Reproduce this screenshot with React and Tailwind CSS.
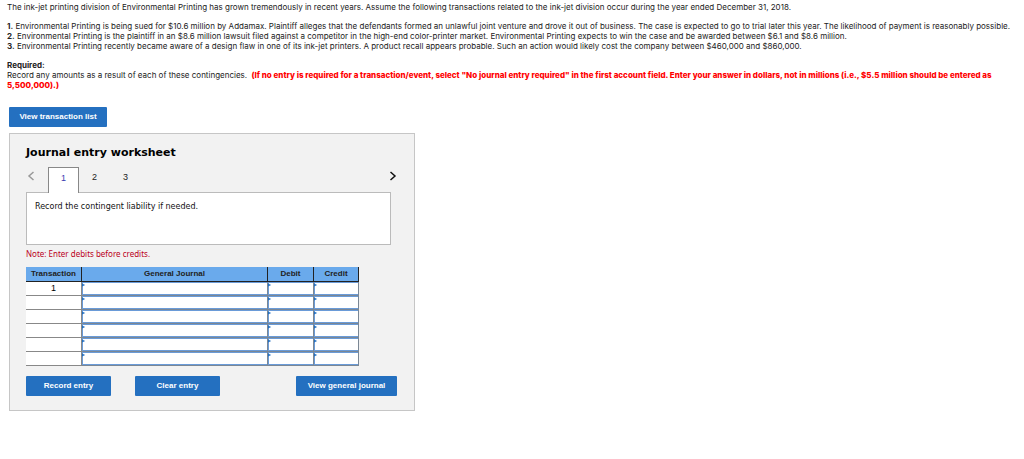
import { useState } from "react";

const contingencies = [
  "Environmental Printing is being sued for $10.6 million by Addamax. Plaintiff alleges that the defendants formed an unlawful joint venture and drove it out of business. The case is expected to go to trial later this year. The likelihood of payment is reasonably possible.",
  "Environmental Printing is the plaintiff in an $8.6 million lawsuit filed against a competitor in the high-end color-printer market. Environmental Printing expects to win the case and be awarded between $6.1 and $8.6 million.",
  "Environmental Printing recently became aware of a design flaw in one of its ink-jet printers. A product recall appears probable. Such an action would likely cost the company between $460,000 and $860,000.",
];

const tabs = [1, 2, 3];
const rows = [1, 2, 3, 4, 5, 6];
const fields = ["General Journal", "Debit", "Credit"];

function Problem() {
  return (
    <section className="font-['Inter',sans-serif] text-[8px] leading-[10px] text-[#222222]">
      <p>
        The ink-jet printing division of Environmental Printing has grown tremendously in recent
        years. Assume the following transactions related to the ink-jet division occur during the
        year ended December 31, 2018.
      </p>
      <div className="my-[9px]">
        {contingencies.map((text, i) => (
          <p key={i}>
            <b>{i + 1}.</b> {text}
          </p>
        ))}
      </div>
      <h2 className="font-bold">Required:</h2>
      <p>
        Record any amounts as a result of each of these contingencies.{" "}
        <b className="ml-0.5 font-extrabold text-[#ff0000]">
          (If no entry is required for a transaction/event, select "No journal entry required" in
          the first account field. Enter your answer in dollars, not in millions (i.e., $5.5
          million should be entered as 5,500,000).)
        </b>
      </p>
    </section>
  );
}

function Button({ className, children }) {
  return (
    <button
      type="button"
      className={`h-5 rounded-[1px] bg-[#2470c0] text-center text-[8px] font-bold text-white hover:bg-[#1c5da3] ${className}`}
    >
      {children}
    </button>
  );
}

function Chevron({ flip }) {
  return (
    <svg className="h-2.5 w-2" viewBox="0 0 8 10" fill="none" stroke="currentColor" strokeWidth="1.5">
      <path d={flip ? "M6.5 1 2 5l4.500 4" : "M1.500 1 6 5 1.500 9"} />
    </svg>
  );
}

function Tabs({ current, onChange }) {
  return (
    <nav className="flex h-[25px] items-stretch text-[9px]">
      <button
        type="button"
        aria-label="Previous"
        className="flex w-[22px] items-center pl-px pb-2 text-[#999999]"
        onClick={() => onChange(Math.max(1, current - 1))}
      >
        <Chevron flip />
      </button>
      {tabs.map((n) => (
        <button
          key={n}
          type="button"
          onClick={() => onChange(n)}
          className={
            n === current
              ? "relative z-10 -mb-px w-[31px] border border-b-0 border-[#888888] bg-white pb-1 text-[#3a3ab0]"
              : "w-[31px] pb-1 text-[#222222]"
          }
        >
          {n}
        </button>
      ))}
      <button
        type="button"
        aria-label="Next"
        className="-mr-1.5 ml-auto flex w-6 items-center justify-end pb-2 text-[#111111]"
        onClick={() => onChange(Math.min(tabs.length, current + 1))}
      >
        <Chevron />
      </button>
    </nav>
  );
}

function EntryTable() {
  return (
    <table className="mt-2 w-full max-w-[333px] table-fixed border-separate border-spacing-0 text-[8px]">
      <thead>
        <tr className="h-[15px] bg-[#6aaaec] text-[#222222]">
          <th className="w-14 border-r border-b border-[#222222] p-0">Transaction</th>
          <th className="border-r border-b border-[#222222] p-0">General Journal</th>
          <th className="w-[46px] border-r border-b border-[#222222] p-0">Debit</th>
          <th className="w-[45px] border-r border-b border-[#222222] p-0">Credit</th>
        </tr>
      </thead>
      <tbody>
        {rows.map((row) => (
          <tr key={row} className="h-3.5 bg-white">
            <td className="h-3.5 border-r border-b border-[#888888] p-0 text-center text-[9px] leading-[13px]">
              {row === 1 ? 1 : ""}
            </td>
            {fields.map((field) => (
              <td key={field} className="relative h-3.5 border-r border-b border-[#7b8794] p-0">
                <input
                  type="text"
                  aria-label={`${field}, line ${row}`}
                  className="block h-[13px] w-full border border-r-0 border-[#6a9bd8] px-1 outline-none"
                />
                <svg className="absolute top-px left-0 h-1 w-1" viewBox="0 0 4 4" fill="#2470c0">
                  <path d="M0 0.500 3.200 2 0 3.500z" />
                </svg>
              </td>
            ))}
          </tr>
        ))}
      </tbody>
    </table>
  );
}

function Worksheet() {
  const [tab, setTab] = useState(1);

  return (
    <section className="mt-1.5 w-full max-w-[406px] border border-[#c6c6c6] bg-[#f2f2f2] px-4 pt-3 pb-3.5">
      <h1 className="font-['DejaVu_Sans',sans-serif] text-[11px] leading-[14px] font-bold text-black">
        Journal entry worksheet
      </h1>
      <div className="mt-[7px] mr-[7px]">
        <Tabs current={tab} onChange={setTab} />
        <div className="h-[53px] border border-[#bbbbbb] bg-white px-2 py-2 font-['DejaVu_Sans',sans-serif] text-[8px] leading-3 text-[#111111]">
          Record the contingent liability if needed.
        </div>
      </div>
      <p className="mt-1 font-['Noto_Sans',sans-serif] text-[8px] leading-[10px] text-[#bb0022]">
        Note: Enter debits before credits.
      </p>
      <EntryTable />
      <div className="mt-2.5 flex max-w-[371px]">
        <Button className="w-[85px]">Record entry</Button>
        <Button className="ml-6 w-[85px]">Clear entry</Button>
        <Button className="ml-auto w-[101px]">View general journal</Button>
      </div>
    </section>
  );
}

function App() {
  return (
    <div className="min-h-screen bg-white pt-0.5 font-['Liberation_Sans',Arial,sans-serif]">
      <div className="pr-1 pl-[7px]">
        <Problem />
      </div>
      <main className="mt-3 px-[9px]">
        <Button className="w-[98px]">View transaction list</Button>
        <Worksheet />
      </main>
    </div>
  );
}

export default App;
